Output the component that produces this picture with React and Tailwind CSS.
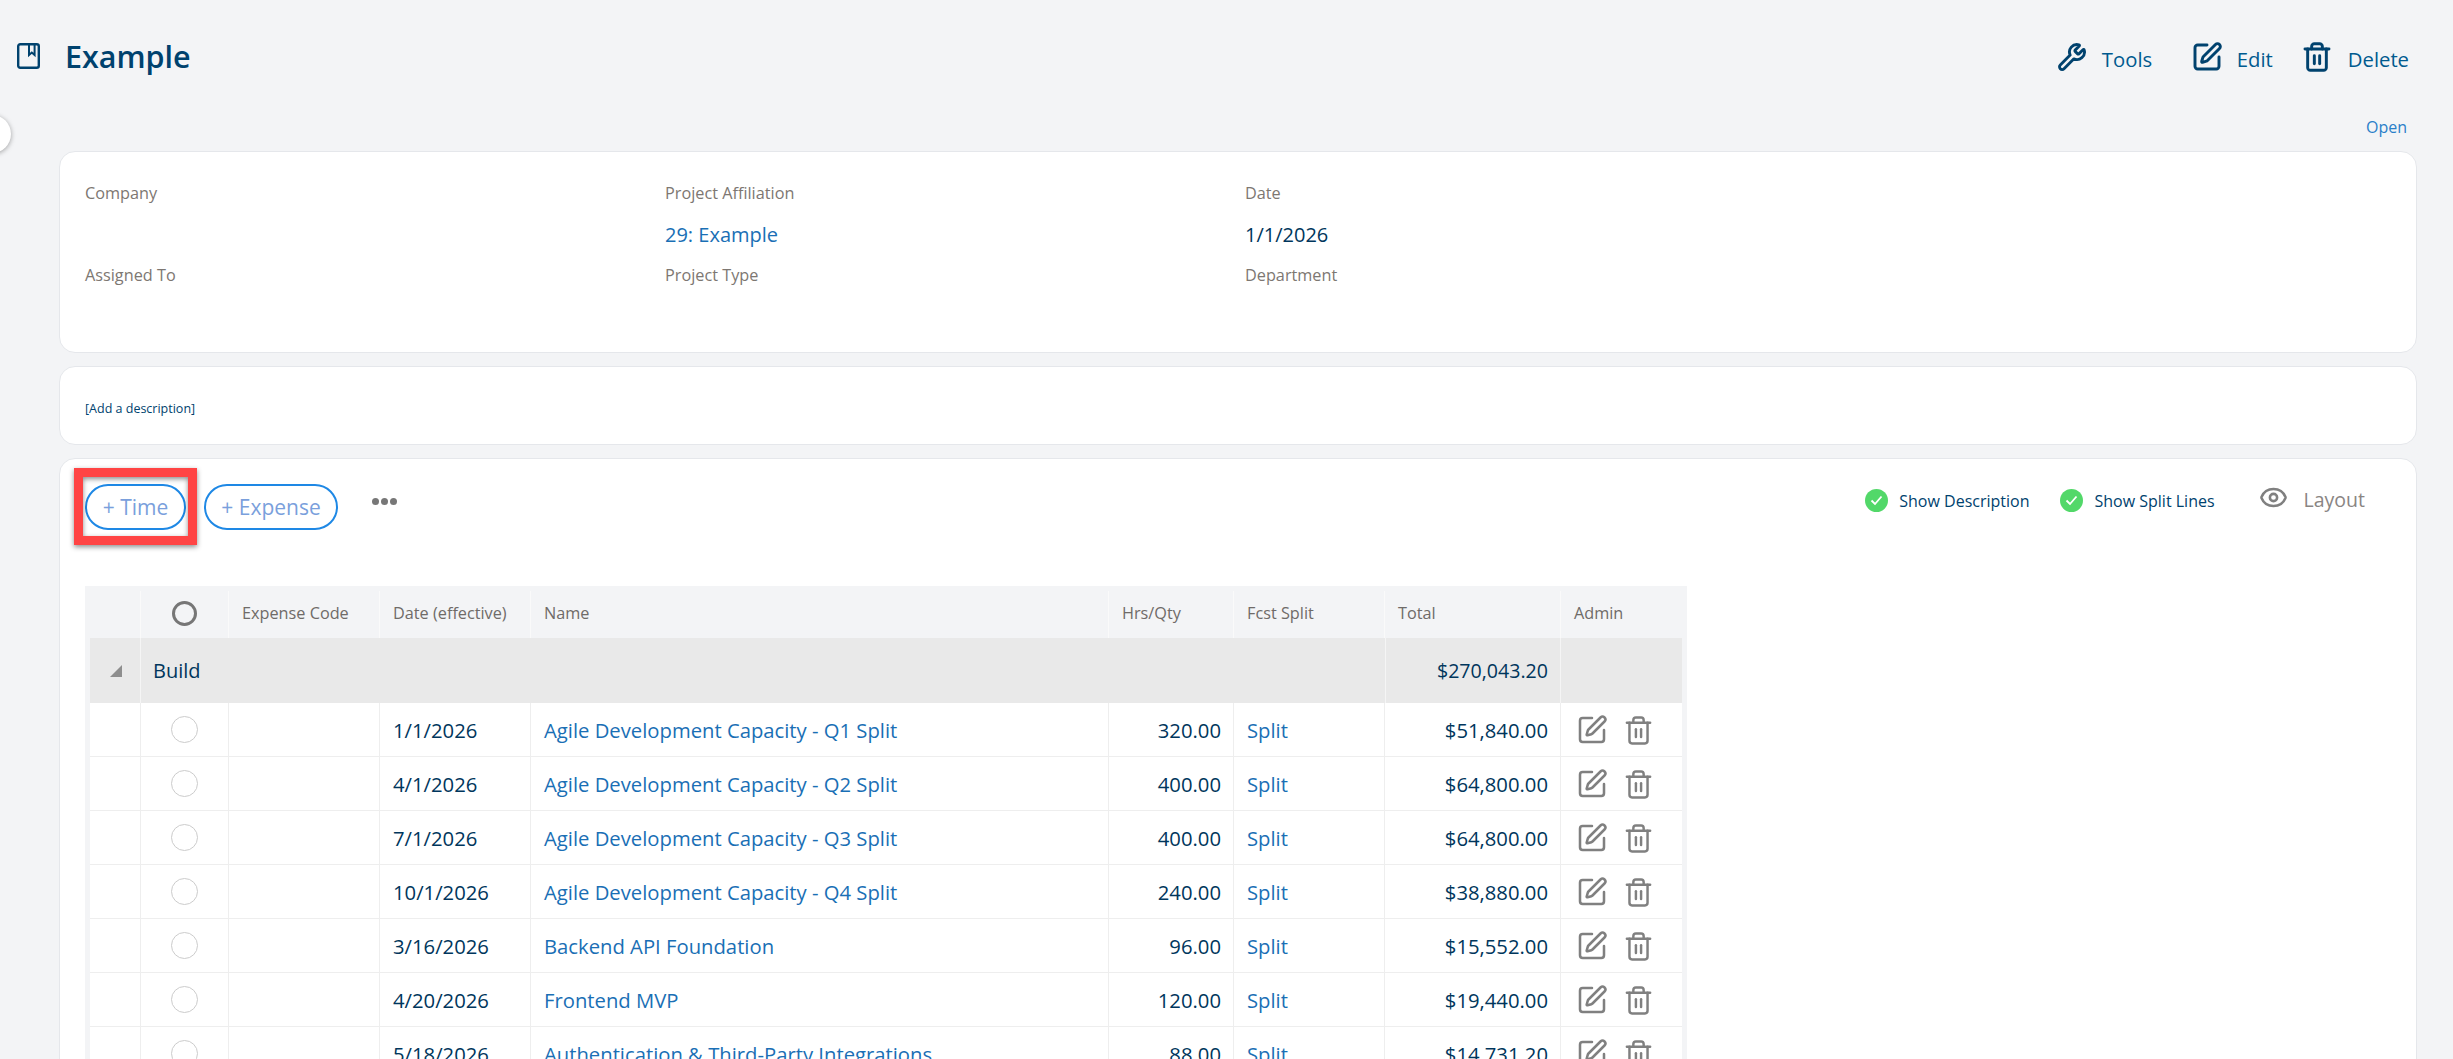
import { Eye, SquarePen, Trash2, Wrench } from "lucide-react";

const rows = [
  ["1/1/2026", "Agile Development Capacity - Q1 Split", "320.00", "$51,840.00"],
  ["4/1/2026", "Agile Development Capacity - Q2 Split", "400.00", "$64,800.00"],
  ["7/1/2026", "Agile Development Capacity - Q3 Split", "400.00", "$64,800.00"],
  ["10/1/2026", "Agile Development Capacity - Q4 Split", "240.00", "$38,880.00"],
  ["3/16/2026", "Backend API Foundation", "96.00", "$15,552.00"],
  ["4/20/2026", "Frontend MVP", "120.00", "$19,440.00"],
  ["5/18/2026", "Authentication & Third-Party Integrations", "88.00", "$14,731.20"],
];

const BookIcon = () => (
  <svg width="23" height="26" viewBox="0 0 23 26" fill="none" stroke="#00426e" strokeWidth="2.4">
    <rect x="1.2" y="1.2" width="20.6" height="23.6" rx="2" />
    <path d="M12 1.5V12l2.8-2.4 2.8 2.4V1.5" strokeWidth="2" />
  </svg>
);

const CheckBadge = () => (
  <span className="flex h-[23px] w-[23px] items-center justify-center rounded-full bg-[#52d869]">
    <svg width="13" height="11" viewBox="0 0 13 11" fill="none" stroke="#fff" strokeWidth="1.8">
      <path d="M1.5 5.5l3.5 3.5 6.5-7.5" />
    </svg>
  </span>
);

const Label = ({ children }) => <div className="text-[16.25px] leading-[41px] text-[#7d7772]">{children}</div>;

const HeaderAction = ({ icon, label, className }) => (
  <div className={`flex items-center ${className}`}>
    {icon}
    <span className="pt-[4px] text-[20.25px] leading-[27px] text-[#005a8f]">{label}</span>
  </div>
);

const Th = ({ children, className = "" }) => (
  <th className={`border-r border-[#fafafa] bg-[#f3f4f6] pr-3 pb-[2px] pl-[13px] text-left text-[16.25px] font-normal text-[#6f6b68] ${className}`}>
    {children}
  </th>
);

const Td = ({ children, className = "text-[#00365c]" }) => (
  <td className={`border-r border-b border-[#eeeeee] pt-[1px] pr-3 pl-[13px] text-[20.25px] ${className}`}>{children}</td>
);

export default function App() {
  return (
    <div className="relative h-[1059px] overflow-hidden bg-[#f3f4f6] font-['Open_Sans','Noto_Sans',sans-serif]">
      {/* sidebar toggle peeking in from the left */}
      <div className="absolute top-[115px] -left-[27px] h-[38px] w-[38px] rounded-full bg-white shadow-[0_1px_5px_rgba(0,0,0,0.35)]" />

      <header className="flex h-[112px] items-start justify-between pr-[44px] pl-[17px]">
        <div className="flex items-center pt-[42px]">
          <BookIcon />
          <h1 className="ml-[25px] text-[30.5px] leading-[28px] font-semibold text-[#00426e]">Example</h1>
        </div>
        <div className="flex items-center pt-[41px]">
          <HeaderAction
            className="w-[134px]"
            icon={<Wrench size={30} strokeWidth={2.3} color="#00426e" className="mr-[15px]" />}
            label="Tools"
          />
          <HeaderAction
            className="w-[110px]"
            icon={<SquarePen size={32} strokeWidth={2.2} color="#00426e" className="mr-[14px]" />}
            label="Edit"
          />
          <HeaderAction
            icon={<Trash2 size={32} strokeWidth={2.2} color="#00426e" className="mr-[15px]" />}
            label="Delete"
          />
        </div>
      </header>

      <div className="flex h-[39px] items-start justify-end pt-[6px] pr-[46px] text-[16px] leading-[18px] text-[#2a7fc9]">
        Open
      </div>

      <main className="ml-[59px] flex w-[2358px] flex-col gap-[13px]">
        <section className="h-[202px] rounded-2xl border border-[#e5e7eb] bg-white pt-[21px] pl-[25px]">
          <div className="grid grid-cols-[580px_580px_1fr]">
            <Label>Company</Label>
            <Label>Project Affiliation</Label>
            <Label>Date</Label>
            <div />
            <div className="text-[20px] leading-[41px] text-[#1a6fb5]">29: Example</div>
            <div className="text-[20px] leading-[41px] text-[#00365c]">1/1/2026</div>
            <Label>Assigned To</Label>
            <Label>Project Type</Label>
            <Label>Department</Label>
          </div>
        </section>

        <section className="flex h-[79px] items-center rounded-2xl border border-[#e5e7eb] bg-white pt-[7px] pl-[25px] text-[12.5px] text-[#00426e]">
          [Add a description]
        </section>

        <section className="h-[700px] rounded-2xl border border-[#e5e7eb] bg-white pl-[25px]">
          <div className="flex h-[127px] items-start justify-between pt-[25px] pr-[49px]">
            <div className="flex items-start gap-[18px]">
              <div className="relative">
                <button className="h-[46px] w-[101px] rounded-full border-2 border-[#1e88e5] pt-[2px] text-[21px] text-[#7a9fdc]">
                  + Time
                </button>
                <div className="absolute -top-[16px] -left-[11px] h-[77px] w-[123px] border-[9px] border-[#ff4444] shadow-[0_2px_5px_rgba(0,0,0,0.45),inset_0_2px_5px_rgba(0,0,0,0.45)]" />
              </div>
              <button className="h-[46px] w-[134px] rounded-full border-2 border-[#1e88e5] pt-[2px] text-[21px] text-[#7a9fdc]">
                + Expense
              </button>
              <div className="ml-[16px] flex gap-[2px] pt-[14px]">
                <span className="h-[7px] w-[7px] rounded-full bg-[#777777]" />
                <span className="h-[7px] w-[7px] rounded-full bg-[#777777]" />
                <span className="h-[7px] w-[7px] rounded-full bg-[#777777]" />
              </div>
            </div>
            <div className="flex items-center pt-[2px]">
              <CheckBadge />
              <span className="ml-[11px] text-[16px] text-[#00426e]">Show Description</span>
              <span className="ml-[31px]"><CheckBadge /></span>
              <span className="ml-[11px] text-[16px] text-[#00426e]">Show Split Lines</span>
              <Eye size={29} strokeWidth={2.1} color="#808080" className="ml-[44px] -translate-y-[3px]" />
              <span className="ml-[16px] -translate-y-[1px] mr-[2px] text-[19.5px] text-[#8a8583]">Layout</span>
            </div>
          </div>

          <table className="w-[1602px] table-fixed border-separate border-spacing-0 border-[5px] border-[#f3f4f6] border-b-0">
            <colgroup>
              <col className="w-[51px]" />
              <col className="w-[88px]" />
              <col className="w-[151px]" />
              <col className="w-[151px]" />
              <col className="w-[578px]" />
              <col className="w-[125px]" />
              <col className="w-[151px]" />
              <col className="w-[176px]" />
              <col className="w-[121px]" />
            </colgroup>
            <thead>
              <tr className="h-[47px]">
                <Th />
                <th className="border-r border-[#fafafa] bg-[#f3f4f6] pb-[2px]">
                  <span className="mx-auto block h-[25px] w-[25px] rounded-full border-[3px] border-[#767676]" />
                </th>
                <Th>Expense Code</Th>
                <Th>Date (effective)</Th>
                <Th>Name</Th>
                <Th>Hrs/Qty</Th>
                <Th>Fcst Split</Th>
                <Th>Total</Th>
                <Th className="border-r-0">Admin</Th>
              </tr>
            </thead>
            <tbody>
              <tr className="h-[65px] bg-[#e9e9e9]">
                <td className="border-r border-[#f5f5f5] pl-[2px] text-center">
                  <span className="inline-block h-0 w-0 border-b-[12px] border-l-[12px] border-b-[#8e8e8e] border-l-transparent" />
                </td>
                <td colSpan="6" className="px-3 text-[20px] text-[#00365c]">Build</td>
                <td className="border-x border-[#f5f5f5] px-3 text-right text-[19.6px] text-[#00365c]">$270,043.20</td>
                <td />
              </tr>
              {rows.map(([date, name, qty, total]) => (
                <tr key={name} className="h-[54px]">
                  <Td />
                  <td className="border-r border-b border-[#eeeeee]">
                    <span className="mx-auto block h-[27px] w-[27px] rounded-full border border-[#cccccc]" />
                  </td>
                  <Td />
                  <Td>{date}</Td>
                  <Td className="text-[#1a6fb5]">{name}</Td>
                  <Td className="text-right text-[#00365c]">{qty}</Td>
                  <Td className="text-[#1a6fb5]">Split</Td>
                  <Td className="text-right text-[#00365c]">{total}</Td>
                  <Td className="border-r-0">
                    <div className="flex items-center gap-[15px] pl-[2px]">
                      <SquarePen size={32} strokeWidth={1.9} color="#808080" />
                      <Trash2 size={31} strokeWidth={1.9} color="#808080" />
                    </div>
                  </Td>
                </tr>
              ))}
            </tbody>
          </table>
        </section>
      </main>
    </div>
  );
}
